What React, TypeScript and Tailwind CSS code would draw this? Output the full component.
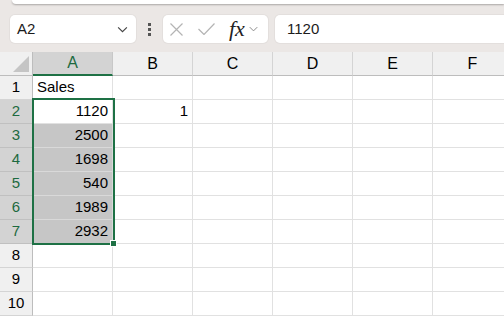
import React from "react";

const columns = ["A", "B", "C", "D", "E", "F"];

const rows: { a: string; b: string }[] = [
  { a: "Sales", b: "" },
  { a: "1120", b: "1" },
  { a: "2500", b: "" },
  { a: "1698", b: "" },
  { a: "540", b: "" },
  { a: "1989", b: "" },
  { a: "2932", b: "" },
  { a: "", b: "" },
  { a: "", b: "" },
  { a: "", b: "" },
];

function Chevron({ className }: { className?: string }) {
  return (
    <svg className={className} viewBox="0 0 12 8" fill="none" stroke="currentColor" strokeWidth="1.3">
      <path d="M1 1.5 L6 6.5 L11 1.5" />
    </svg>
  );
}

function FormulaBar() {
  return (
    <div className="flex h-[48px] items-start pt-[11px]">
      <div className="ml-[10px] flex h-[28px] w-[126px] items-center justify-between rounded-[5px] bg-white pl-[7px] pr-[8px] shadow-[0_0_0_1px_#e3dfdd]">
        <span className="text-[15px] text-[#1b1b1b]">A2</span>
        <Chevron className="h-[7px] w-[11px] text-[#444]" />
      </div>
      <div className="flex h-[28px] w-[27px] flex-col items-center justify-center gap-[2px]">
        <span className="h-[3px] w-[3px] bg-[#555]" />
        <span className="h-[3px] w-[3px] bg-[#555]" />
        <span className="h-[3px] w-[3px] bg-[#555]" />
      </div>
      <div className="flex h-[28px] w-[105px] items-center rounded-[5px] bg-white pl-[7px] shadow-[0_0_0_1px_#e3dfdd]">
        <svg className="h-[13px] w-[13px] text-[#b4b4b4]" viewBox="0 0 13 13" fill="none" stroke="currentColor" strokeWidth="1.2">
          <path d="M0.5 0.5 L12.5 12.5 M12.5 0.5 L0.5 12.5" />
        </svg>
        <svg className="ml-[15px] h-[12px] w-[17px] text-[#b4b4b4]" viewBox="0 0 17 12" fill="none" stroke="currentColor" strokeWidth="1.2">
          <path d="M0.5 6 L6 11.5 L16.5 0.5" />
        </svg>
        <span className="ml-[14px] font-['Liberation_Serif',serif] text-[22px] italic leading-none text-[#222]">fx</span>
        <Chevron className="ml-[4px] h-[6px] w-[9px] text-[#888]" />
      </div>
      <div className="ml-[7px] flex h-[28px] flex-1 items-center rounded-l-[5px] bg-white pl-[12px] shadow-[0_0_0_1px_#e3dfdd]">
        <span className="text-[15px] text-[#1b1b1b]">1120</span>
      </div>
    </div>
  );
}

export default function App() {
  return (
    <div className="h-[316px] w-[504px] overflow-hidden bg-[#ebe7e5] font-['Liberation_Sans',Arial,sans-serif]">
      <div className="ml-[12px] h-[4px] rounded-bl-[6px] bg-white shadow-[0_1px_2px_rgba(0,0,0,0.28)]" />
      <FormulaBar />

      <div className="relative grid grid-cols-[33px_repeat(6,80px)] grid-rows-[repeat(11,24px)] bg-white">
        <div className="relative border-b border-r border-[#bdbdbd] bg-[#f0f0f0]">
          <div className="absolute bottom-[3px] right-[3px] h-0 w-0 border-b-[16px] border-l-[16px] border-b-[#c5c5c5] border-l-transparent" />
        </div>
        {columns.map((col) =>
          col === "A" ? (
            <div
              key={col}
              className="flex items-center justify-center border-b-2 border-r border-b-[#1e7145] border-r-[#c8c8c8] bg-[#d3d3d3] text-[16px] text-[#1d6a40]"
            >
              {col}
            </div>
          ) : (
            <div
              key={col}
              className="flex items-center justify-center border-b border-r border-b-[#bdbdbd] border-r-[#d4d4d4] bg-[#f0f0f0] text-[16px] text-black"
            >
              {col}
            </div>
          )
        )}

        {rows.map((row, i) => {
          const n = i + 1;
          const selected = n >= 2 && n <= 7;
          return (
            <React.Fragment key={n}>
              <div
                className={
                  selected
                    ? "flex items-center justify-center border-b border-r border-b-[#c0c0c0] border-r-[#bdbdbd] bg-[#d3d3d3] text-[15px] text-[#1d6a40]"
                    : "flex items-center justify-center border-b border-r border-b-[#d4d4d4] border-r-[#bdbdbd] bg-[#f0f0f0] text-[15px] text-black"
                }
              >
                {n}
              </div>
              <div
                className={
                  n === 1
                    ? "flex items-center border-b border-r border-[#e1e1e1] pl-[4px] text-[15px] text-black"
                    : n >= 3 && n <= 7
                      ? "flex items-center justify-end border-b border-r border-[#d9d9d9] bg-[#c6c6c6] pr-[4px] text-[15px] text-black"
                      : "flex items-center justify-end border-b border-r border-[#e1e1e1] pr-[4px] text-[15px] text-black"
                }
              >
                {row.a}
              </div>
              <div className="flex items-center justify-end border-b border-r border-[#e1e1e1] pr-[4px] text-[15px] text-black">
                {row.b}
              </div>
              <div className="border-b border-r border-[#e1e1e1]" />
              <div className="border-b border-r border-[#e1e1e1]" />
              <div className="border-b border-r border-[#e1e1e1]" />
              <div className="border-b border-r border-[#e1e1e1]" />
            </React.Fragment>
          );
        })}

        {/* selection A2:A7 */}
        <div className="pointer-events-none absolute left-[32px] top-[46px] h-[147px] w-[83px] border-2 border-[#1e7145]" />
        <div className="absolute left-[110px] top-[188px] h-[7px] w-[7px] border border-white bg-[#1e7145]" />
      </div>
    </div>
  );
}
